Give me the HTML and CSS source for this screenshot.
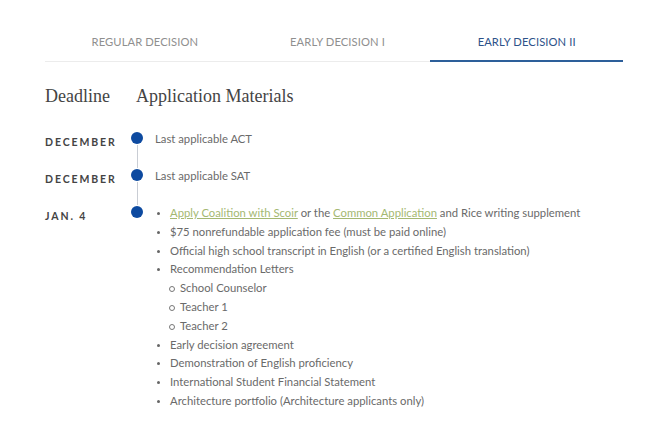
FILE: index.html
```html
<!DOCTYPE html>
<html>
<head>
<meta charset="utf-8">
<link rel="stylesheet" href="styles.css">
</head>
<body>
<div class="page">
  <nav class="tabs">
    <div class="tab">REGULAR DECISION</div>
    <div class="tab">EARLY DECISION I</div>
    <div class="tab active">EARLY DECISION II</div>
  </nav>
  <div class="heads">
    <h2 class="h-deadline">Deadline</h2>
    <h2 class="h-materials">Application Materials</h2>
  </div>
  <div class="timeline">
    <div class="row">
      <div class="label">DECEMBER</div>
      <div class="marker"><span class="dot"></span><span class="line"></span></div>
      <div class="content"><p>Last applicable ACT</p></div>
    </div>
    <div class="row">
      <div class="label">DECEMBER</div>
      <div class="marker"><span class="dot"></span><span class="line"></span></div>
      <div class="content"><p>Last applicable SAT</p></div>
    </div>
    <div class="row last">
      <div class="label">JAN. 4</div>
      <div class="marker"><span class="dot"></span></div>
      <div class="content">
        <ul class="list">
          <li><a href="#">Apply Coalition with Scoir</a> or the <a href="#">Common Application</a> and Rice writing supplement</li>
          <li>$75 nonrefundable application fee (must be paid online)</li>
          <li>Official high school transcript in English (or a certified English translation)</li>
          <li>Recommendation Letters
            <ul class="sub">
              <li>School Counselor</li>
              <li>Teacher 1</li>
              <li>Teacher 2</li>
            </ul>
          </li>
          <li>Early decision agreement</li>
          <li>Demonstration of English proficiency</li>
          <li>International Student Financial Statement</li>
          <li>Architecture portfolio (Architecture applicants only)</li>
        </ul>
      </div>
    </div>
  </div>
</div>
</body>
</html>
```
FILE: styles.css
```css
* { box-sizing: border-box; }
body {
  margin: 0;
  background: #fff;
  font-family: Lato, "Noto Sans", sans-serif;
  color: #6a6a6a;
}
.page {
  width: 578px;
  margin-left: 45px;
}
.tabs {
  display: grid;
  grid-template-columns: repeat(3, 1fr);
  padding-top: 22px;
  border-bottom: 1px solid #ececec;
}
.tab {
  text-align: center;
  font-size: 11.2px;
  letter-spacing: 0.1px;
  color: #8f8f8f;
  padding: 13px 0 12px 7px;
  border-bottom: 2px solid transparent;
  margin-bottom: -1px;
}
.tab.active {
  padding-left: 0;
  color: #2d5289;
  border-bottom-color: #2d5f9a;
}
.heads {
  display: flex;
  padding-top: 23px;
  height: 70px;
}
.heads h2 {
  margin: 0;
  font-family: "Liberation Serif", "DejaVu Serif", serif;
  font-weight: normal;
  font-size: 18px;
  color: #444;
  line-height: 22px;
}
.h-deadline { width: 91px; }
.timeline { display: flex; flex-direction: column; }
.row { display: flex; height: 37px; }
.row.last { height: auto; }
.label {
  width: 80px;
  padding-top: 3px;
  font-size: 10.5px;
  font-weight: bold;
  letter-spacing: 1.9px;
  color: #444;
  line-height: 14px;
}
.marker {
  width: 24px;
  display: flex;
  flex-direction: column;
  align-items: center;
}
.dot {
  width: 12px;
  height: 12px;
  border-radius: 50%;
  background: #0d4aa0;
  flex: none;
}
.line {
  flex: 1;
  width: 1px;
  background: #c9cdd4;
  margin: 1px 0;
}
.content {
  margin-left: 6px;
  font-size: 11.3px;
  line-height: 14px;
}
.content p { margin: 0; }
.list {
  list-style: none;
  margin: 0;
  padding: 0 0 20px;
}
.list li {
  position: relative;
  padding-left: 15px;
  line-height: 18.8px;
}
.list > li:first-child { margin-top: -2px; }
.list > li::before {
  content: "";
  position: absolute;
  left: 2px;
  top: 8px;
  width: 3px;
  height: 3px;
  border-radius: 50%;
  background: #666;
}
.list a {
  color: #a4b872;
  text-decoration: underline;
}
.sub {
  list-style: none;
  margin: 0;
  padding: 0 0 0 10px;
}
.list .sub li { padding-left: 0; }
.list .sub li::before {
  content: "";
  position: absolute;
  left: -11px;
  top: 7px;
  width: 4px;
  height: 4px;
  border-radius: 50%;
  border: 1px solid #777;
  background: transparent;
}
```
